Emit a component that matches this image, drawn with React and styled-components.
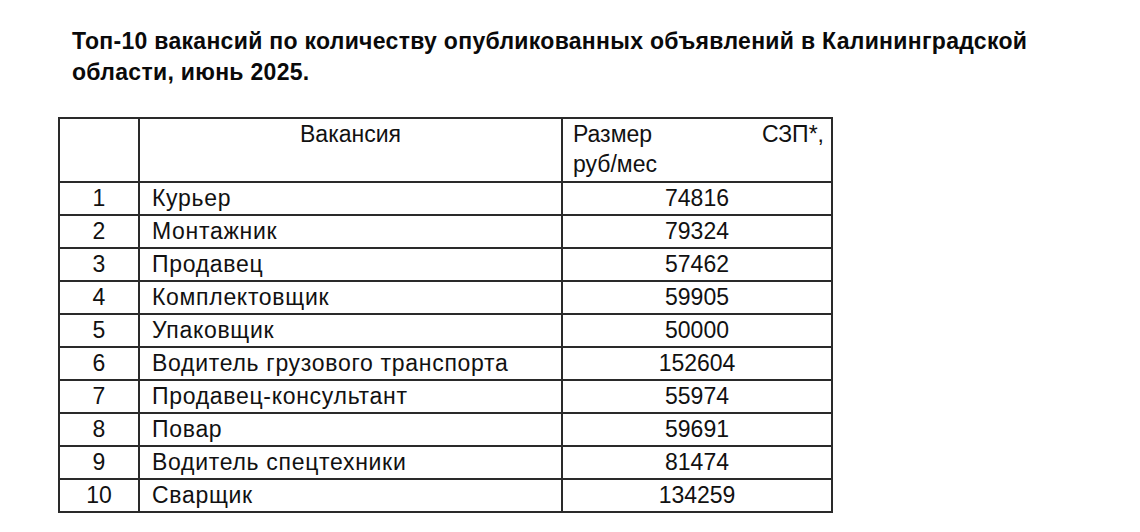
import React from "react";
import styled, { createGlobalStyle } from "styled-components";

const GlobalStyle = createGlobalStyle`
  body {
    margin: 0;
    background: #ffffff;
    font-family: "Liberation Sans", Arial, sans-serif;
    color: #111111;
  }
`;

const Page = styled.div`
  padding: 26px 0 0 58px;
`;

const Title = styled.h1`
  margin: 0 0 29px 14px;
  width: 1000px;
  font-size: 23px;
  font-weight: bold;
  line-height: 31px;
  letter-spacing: 0.3px;
  color: #0a0a0a;
`;

const Table = styled.table`
  border-collapse: collapse;
  border: 2px solid #222222;
  font-size: 23px;
  table-layout: fixed;
  width: 773px;
`;

const HeadCell = styled.th`
  border: 2px solid #2a2a2a;
  font-weight: normal;
  vertical-align: top;
  height: 62px;
  padding: 0 7px 0 ${(p) => (p.$wide ? "10px" : "7px")};
  line-height: 30px;
  text-align: ${(p) => (p.$wide ? "left" : "center")};
`;

const HeadLine = styled.div`
  display: flex;
  justify-content: space-between;
`;

const Cell = styled.td`
  border: 2px solid #2a2a2a;
  height: 31px;
  padding: 0 ${(p) => (p.$align === "left" ? "12px" : "4px")};
  line-height: 31px;
  text-align: ${(p) => p.$align || "center"};
  letter-spacing: ${(p) => (p.$align === "left" ? "0.7px" : "0")};
  white-space: nowrap;
`;

const rows = [
  ["Курьер", "74816"],
  ["Монтажник", "79324"],
  ["Продавец", "57462"],
  ["Комплектовщик", "59905"],
  ["Упаковщик", "50000"],
  ["Водитель грузового транспорта", "152604"],
  ["Продавец-консультант", "55974"],
  ["Повар", "59691"],
  ["Водитель спецтехники", "81474"],
  ["Сварщик", "134259"],
];

const App = () => (
  <Page>
    <GlobalStyle />
    <Title>
      Топ-10 вакансий по количеству опубликованных объявлений в Калининградской
      области, июнь 2025.
    </Title>
    <Table>
      <colgroup>
        <col style={{ width: 80 }} />
        <col style={{ width: 423 }} />
        <col style={{ width: 270 }} />
      </colgroup>
      <thead>
        <tr>
          <HeadCell />
          <HeadCell>Вакансия</HeadCell>
          <HeadCell $wide>
            <HeadLine>
              <span>Размер</span>
              <span>СЗП*,</span>
            </HeadLine>
            руб/мес
          </HeadCell>
        </tr>
      </thead>
      <tbody>
        {rows.map(([name, pay], i) => (
          <tr key={name}>
            <Cell>{i + 1}</Cell>
            <Cell $align="left">{name}</Cell>
            <Cell>{pay}</Cell>
          </tr>
        ))}
      </tbody>
    </Table>
  </Page>
);

export default App;
